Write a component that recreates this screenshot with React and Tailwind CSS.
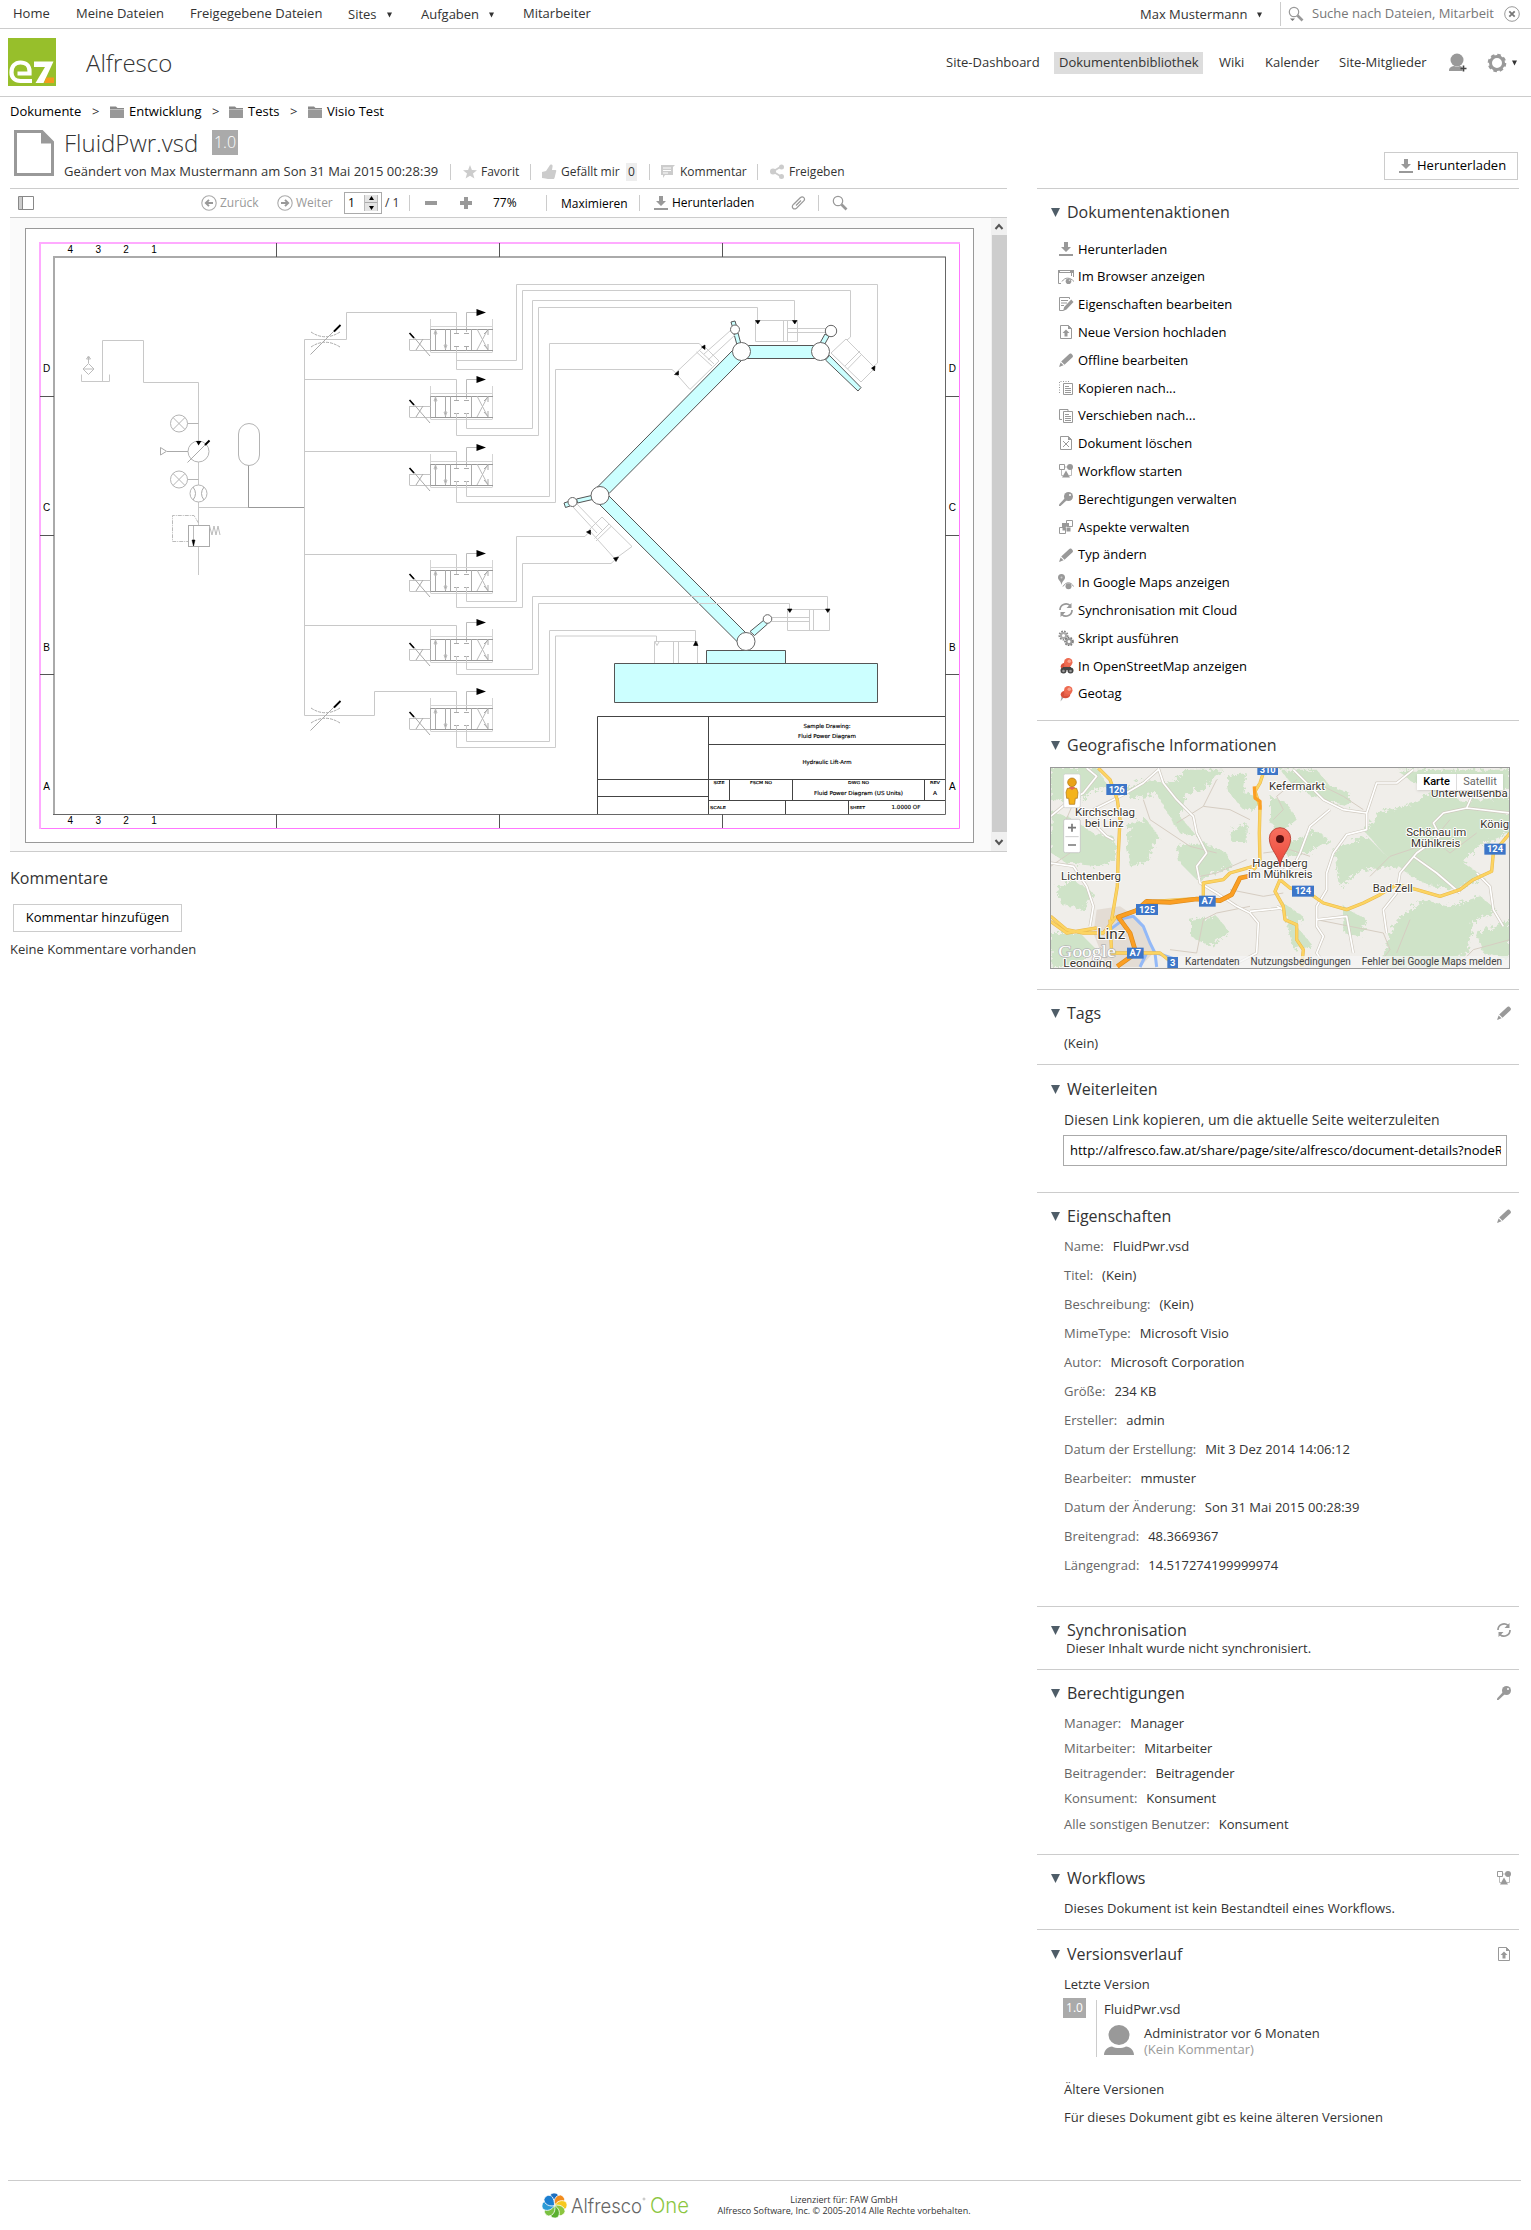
import React from "react";

const G = "#999999";

function Svg({ w = 16, h = 16, vb, children, className = "" }) {
  return (
    <svg width={w} height={h} viewBox={vb || `0 0 ${w} ${h}`} className={"shrink-0 " + className} fill="none">
      {children}
    </svg>
  );
}

const DownloadIcon = () => (
  <Svg><path d="M6 1h4v5h3l-5 5-5-5h3zM1 13h14v2H1z" fill={G} /></Svg>
);
const PencilIcon = () => (
  <Svg><path d="M1 15l1.600-4.500 3 2.800zM3.200 9.500l7.800-7.300c.8-.8 1.800-.9 2.600-.2l.9.900c.7.8.6 1.800-.2 2.600l-7.800 7.200z" fill={G} /></Svg>
);
const BrowserIcon = () => (
  <Svg><path d="M0 1h16v3H0z" fill={G} /><path d="M2 2.500h10" stroke="#fff" /><path d="M.5 3v11.500H3M15.500 3v5M13.500 4v3M4 12.500c3-4.500 8-4.500 12 0" stroke={G} /><circle cx="10.500" cy="12.300" r="2.800" fill={G} /><circle cx="11.500" cy="11.300" r=".8" fill="#ddd" /></Svg>
);
const EditDocIcon = () => (
  <Svg><path d="M11.500 3V1.500H1.500v13h4M3 4.500h7M3 7h6M3 9.500h3" stroke={G} /><path d="M5 15l1.200-4 7-7.500L15.500 6l-7 7.500z" fill={G} /></Svg>
);
const UploadDocIcon = () => (
  <Svg><path d="M2.500 1.500h8l3 3v10h-11z" stroke={G} /><path d="M10 1l4 4h-4zM8 5.500l3.500 3.500H9.500v3.500h-3V9H4.500z" fill={G} /></Svg>
);
const CopyIcon = () => (
  <Svg><path d="M1.500 13V1.500H11" stroke={G} strokeDasharray="1 1.500" /><path d="M5.500 3.500h9v11h-9z" stroke={G} /><path d="M7 6.500h4M7 8.500h6M7 10.500h6M7 12.500h6" stroke={G} /></Svg>
);
const MoveIcon = () => (
  <Svg><path d="M4 11.500H1.500v-10H10V3M5.500 3.500h9v11h-9z" stroke={G} /><path d="M7 6.500h4M7 8.500h6M7 10.500h6M7 12.500h6" stroke={G} /></Svg>
);
const DeleteIcon = () => (
  <Svg><path d="M2.500 1.500h8l3 3v10h-11zM5 6l6 6M11 6l-6 6" stroke={G} /><path d="M10 1l4 4h-4z" fill={G} /></Svg>
);
const WorkflowIcon = () => (
  <Svg><path d="M1.500 1.500h5v5h-5z" stroke={G} /><path d="M3.500 7v5.500H5M13.500 6v6.500H11M7 4h3" stroke="#bbb" /><circle cx="12" cy="4" r="3" fill={G} /><path d="M8 7.500l4 7H4z" fill={G} /></Svg>
);
const KeyIcon = () => (
  <Svg><circle cx="10.500" cy="5.500" r="4.500" fill={G} /><path d="M1 13.500L7 7l2 2-6.500 6H1z" fill={G} /><circle cx="12" cy="4" r="1" fill="#fff" /></Svg>
);
const AspectIcon = () => (
  <Svg><path d="M8.500 1.500h6v6h-6zM1.500 8.500h6v6h-6z" stroke={G} /><path d="M4 4h4v4H4zM8.500 8.500h4v4h-4zM8 4h3v3H8zM4.500 8.500h3v3h-3z" fill={G} /></Svg>
);
const MapsIcon = () => (
  <Svg><path d="M3.500 0a3.500 3.500 0 013.500 3.500C7 6 4 7 3.500 11 3 7 0 6 0 3.500A3.500 3.500 0 013.500 0z" fill={G} /><circle cx="3.500" cy="3.500" r="1" fill="#ccc" /><path d="M5 12.500c3-5 8-5 10.500 0" stroke={G} /><circle cx="10.500" cy="12.200" r="3" fill={G} /></Svg>
);
const SyncIcon = () => (
  <Svg><path d="M2 8a6 6 0 0110-4.600M14 8a6 6 0 01-10 4.600" stroke={G} strokeWidth="1.700" /><path d="M13.500 1v5H8.500zM2.500 15v-5h5z" fill={G} /></Svg>
);
const GearsIcon = () => (
  <Svg>
    <circle cx="5.500" cy="5.500" r="4" stroke="#888" strokeWidth="2" strokeDasharray="1.600 1.100" /><circle cx="5.500" cy="5.500" r="2.600" stroke="#aaa" strokeWidth="2" />
    <circle cx="11" cy="11.500" r="3.800" stroke="#777" strokeWidth="2" strokeDasharray="1.600 1.100" /><circle cx="11" cy="11.500" r="2.500" stroke="#999" strokeWidth="2" />
  </Svg>
);
const PinShape = () => (
  <><path d="M7 10l-4.500 5.500 1.500-7z" fill="#aaa" /><ellipse cx="7.500" cy="8.500" rx="4.800" ry="3.800" fill="#d9503a" /><path d="M6 4h8l-3 6H6z" fill="#e2604a" /><circle cx="10.300" cy="4.300" r="4.200" fill="#ee6a50" /><circle cx="11.300" cy="3.300" r="1.800" fill="#f8a48f" /></>
);
const PinIcon = () => <Svg><PinShape /></Svg>;
const OsmIcon = () => (
  <Svg><PinShape /><circle cx="5.500" cy="12.500" r="3" fill="#444" /><circle cx="12.500" cy="12.500" r="3" fill="#444" /><path d="M5 9h8v3H5z" fill="#444" /><circle cx="5.500" cy="13" r="1.300" fill="#999" /><circle cx="12.500" cy="13" r="1.300" fill="#999" /></Svg>
);
const FolderIcon = () => (
  <Svg w={14} h={12}><path d="M0 .500h6l1.500 1.500H14v1.300H0z" fill="#888" /><path d="M0 3.500h14V12H0z" fill="#999" /></Svg>
);
const CircleArrow = ({ flip }) => (
  <Svg className={flip ? "rotate-180" : ""}><circle cx="8" cy="8" r="7.200" stroke="#aaa" strokeWidth="1.100" /><path d="M12 8H5.500M8 4.800L4.800 8 8 11.200" stroke="#999" strokeWidth="1.900" /></Svg>
);
const Magnifier = ({ caret }) => (
  <Svg><circle cx="6" cy="6" r="4.700" stroke={G} strokeWidth="1.200" /><path d="M9.500 9.500l5 5" stroke={G} strokeWidth="2.600" />{caret && <path d="M2 12.500h5L4.500 15z" fill="#777" />}</Svg>
);

const Caret = () => <svg width="5" height="6" className="shrink-0"><path d="M0 .500h5L2.500 5.500z" fill="#333" /></svg>;

/* ---------- hydraulic drawing ---------- */
const valves = [
  { y: 312.5, feed: "M346.500 312.500H456.500V333" },
  { y: 379.5, feed: "M304.500 379.500H456.500V400" },
  { y: 447.5, feed: "M304.500 451.500H456.500V468" },
  { y: 553.5, feed: "M304.500 554.500H456.500V574" },
  { y: 622.5, feed: "M304.500 625.500H456.500V643" },
  { y: 691.5, feed: "M304.500 715.500H374.500V691.500H456.500V712" },
];
const pipes = [
  "M456.500 347V360.500H516.500V284.500H877.500V363L872 368",
  "M456.500 347V369.500H522.500V290.500H850.500V337L847 340",
  "M466.500 413V428.500H532.500V300.500H794.500V320",
  "M456.500 413V435.500H538.500V307.500H757.500V320",
  "M466.500 481V496.500H549.500V343.500H699L704 348",
  "M456.500 481V502.500H555.500V369.500H672L677 374",
  "M466.500 587V601.500H516.500V536.500H585L589 532",
  "M456.500 587V607.500H522.500V563.500H611L616 559",
  "M466.500 656V669.500H532.500V596.500H827.500V609",
  "M456.500 656V674.500H538.500V603.500H789.500V609",
  "M466.500 725V741.500H549.500V630.500H695.500V642",
  "M456.500 725V747.500H555.500V636H656.500V642",
];

function Valve({ y }) {
  return (
    <g transform={`translate(0 ${y - 0.5})`} stroke="#bbb" fill="none">
      <path d="M466.500 20V.500H477" />
      <path d="M476.500 -3V4L486 .500z" fill="#000" stroke="none" />
      <path d="M430.500 7V40M492.500 7V40M430.500 14.500H492.500M430.500 40.500H492.500" stroke="#d4d4d4" />
      <path d="M430 17.500H493M430 38.500H493" stroke="#999" />
      <path d="M450.500 17V38M471.500 17V38M445.500 17V38M435.500 17V38M430.500 17V38" stroke="#aaa" />
      <path d="M434 22l1.500-4 1.500 4zM444 33l1.500 4 1.500-4z" />
      <path d="M454 21.500h5M464 21.500h5M454 34.500h5M464 34.500h5M456.500 34.500V39M466.500 34.500V39" stroke="#aaa" />
      <path d="M477 17L488 38M488 17L477 38" stroke="#bbb" />
      <path d="M484 22L488 18V23M484 33L488 37.500V32" stroke="#aaa" />
      <path d="M409.500 27.500H430.500M409.500 38.500H430.500M409.500 27V38" stroke="#c4c4c4" />
      <path d="M430 44L411 22M416 38L423 27" stroke="#aaa" />
      <path d="M409.500 21L414 26" stroke="#000" strokeWidth="1.600" />
    </g>
  );
}

function Throttle({ y }) {
  return (
    <g transform={`translate(0 ${y})`} fill="none" stroke="#aaa">
      <path d="M311 -7.500Q325 2 340 -7.500M311 7.500Q325 -2 340 7.500" strokeDasharray="3 1" />
      <path d="M310.500 15L340 -14.500" />
      <path d="M334 -8L340.500 -14.500" stroke="#000" strokeWidth="1.800" />
    </g>
  );
}

function Gauge({ y }) {
  return (
    <g fill="none" stroke="#b4b4b4">
      <circle cx="179" cy={y} r="8.500" />
      <path d={`M173 ${y - 6}l12 12M185 ${y - 6}l-12 12M187.500 ${y}H198.500`} />
    </g>
  );
}

function Drawing() {
  const T = ({ x, y, w, s = 5.5, children, a = "middle" }) => (
    <text x={x} y={y} fontSize={s} textAnchor={a} textLength={w} lengthAdjust="spacingAndGlyphs" fill="#000" stroke="#000" strokeWidth=".15">{children}</text>
  );
  return (
    <svg width="949" height="615" viewBox="26 229 947 613" className="block border border-[#999] bg-white" fontFamily="DejaVu Sans, sans-serif">
      <g fill="none">
        <path d="M40.500 828.500H959.500V243.500" stroke="#ff77ff" />
        <path d="M40 829V243H960" stroke="#ffaaff" strokeWidth="2" />
        <path d="M54 814V257H945" stroke="#aaa" strokeWidth="2" />
        <path d="M53 814.500H945.500V256.500" stroke="#666" />
        <path d="M276.500 243V257M499.500 243V257M722.500 243V257M276.500 814V828M499.500 814V828M722.500 814V828M40 396.500H54M40 535.500H54M40 674.500H54M945 396.500H959M945 535.500H959M945 674.500H959" stroke="#555" />
      </g>
      <g fontFamily="Liberation Sans, sans-serif" fill="#000" textAnchor="middle">
        {["D", "C", "B", "A"].map((l, i) => (
          <g key={l} fontSize="10">
            <text x="46.700" y={372 + i * 139.400}>{l}</text><text x="952.300" y={372 + i * 139.400}>{l}</text>
          </g>
        ))}
        {["4", "3", "2", "1"].map((l, i) => (
          <g key={l} fontSize="10">
            <text x={70.300 + i * 27.900} y="253">{l}</text><text x={70.300 + i * 27.900} y="824">{l}</text>
          </g>
        ))}
      </g>
      <g fill="none" stroke="#c8c8c8">
        <path d="M81.500 374.500V381.500H109.500V374.500M102.500 381.500V340.500H143.500V382.500H198.500V441" />
        <path d="M88.500 363.500L94 369L88.500 374.500L83 369zM83.500 369h10M88.500 363V357M86.500 359l2-3 2 3z" stroke="#bbb" />
        <path d="M198.500 462V485M198.500 502V525.500M198.500 546V575M198.500 507.500H304.500" />
        <path d="M248.500 465V507.500H304.500" stroke="#999" />
        <rect x="238.500" y="423.500" width="21" height="42" rx="10.500" stroke="#b4b4b4" />
        <circle cx="198.500" cy="451.500" r="10.500" stroke="#b4b4b4" />
        <path d="M187.500 462.500L209.500 440.500M167 451.500H188M160.500 447.500V455L166.500 451.300z" stroke="#aaa" />
        <path d="M205 445L209.500 440.500" stroke="#000" strokeWidth="2" />
        <path d="M196 441H201.500L198.500 445.500z" fill="#000" stroke="none" />
        <circle cx="198.500" cy="493.500" r="8.500" stroke="#b4b4b4" />
        <path d="M193 487q5 6.500 0 13M204 487q-5 6.500 0 13" stroke="#aaa" />
        <path d="M198.500 523L194 515.500H172.500V541.500H188" strokeDasharray="4 1 1 1" stroke="#bbb" />
        <rect x="188.500" y="525.500" width="21" height="21" stroke="#aaa" />
        <path d="M193.500 526V546M209.500 526l2.500 9 2-9 2 9 2-9 2 9" stroke="#bbb" />
        <path d="M192 540h3l-1.500 6z" fill="#000" stroke="#000" strokeWidth=".5" />
        <path d="M304.500 715.500V339.500H346.500V312.500" />
        {valves.map((v) => <path key={v.y} d={v.feed} />)}
      </g>
      <Gauge y={423.5} />
      <Gauge y={479.5} />
      <Throttle y={339.5} />
      <Throttle y={715.5} />
      {valves.map((v) => <Valve key={v.y} y={v.y} />)}

      <g fill="#ccffff" stroke="#555">
        <path d="M597.500 487L732.500 350.500L742 360L609 493.500z" />
        <path d="M741 345.500H820V358.500H741z" />
        <path d="M608 495L746 633L737.500 642L599.500 504.500z" />
        <path d="M829.500 355.500L861 387.500L858 391L825.500 360z" />
        <path d="M731 322l4-1 1.500 5-4 1zM734 334l4-1 3 11-4 1zM825 334l4 2.500-5 9-4-2.500zM564 503l4.500-1.500 1.500 4.500-4.500 1.500zM576.500 499l15-3.500 1 4-15 3.500zM764 620l3.500 4-13 11.500-4.500-4z" />
        <path d="M706.500 650.500H785.500V663.500H706.500z" />
        <path d="M614.500 663.500H877.500V702.500H614.500z" />
      </g>
      <g fill="none" stroke="#ccc">
        {pipes.map((p) => <path key={p} d={p} />)}
        <path d="M755.500 320.500H797.500V341.500H755.500zM783.500 320.500V341.500M787.500 320.500V341.500M787.500 328.500H826M787.500 332.500H826" />
        <path d="M675.500 373L704 346L719 361L690 389.500zM696.500 352L712 366M699 350L714 364M704 354L731 330M708 360L735 335" />
        <path d="M846 339L831 353L861 382L875 368zM860 351L845 366M862 354L847.500 369" />
        <path d="M602 517L589 530L615 559L632 546.500zM609 524L594.500 538.500M611 526.500L596 541M576 503L602 530M573 507L597 533" />
        <path d="M787.500 609.500H829.500V630.500H787.500zM809.500 609.500V630.500M813.500 609.500V630.500M772 617.500H809.500M772 621.500H809.500" />
        <path d="M654.500 663V641.500H697.500V663M673.500 641.500V663M678.500 641.500V663M655 642l2 3.500 2-3.500" />
      </g>
      <path d="M755.500 320.500h4.500l-2.200 3.500zM792.500 320.500h4.500l-2.200 3.500zM787.500 609h4.500l-2.200 3.500zM825.500 609h4.500l-2.200 3.500zM693.500 645.500h4.500l-2.200-4.500zM674.500 374.500l4-3.500v4zM701.500 347l3.500-2v4.500zM586.500 532l4-2v4.500zM613.500 558l5-1-2.500 4.500zM871.500 368l3.500-2-.5 5z" fill="#000" stroke="#000" strokeWidth=".6" />
      <g fill="#fff" stroke="#666">
        <circle cx="741.500" cy="351.500" r="9" /><circle cx="820.500" cy="351.500" r="9" /><circle cx="600" cy="495.500" r="9" /><circle cx="746" cy="641.500" r="9" />
        <circle cx="735" cy="329.500" r="4.500" /><circle cx="831" cy="331" r="5.700" /><circle cx="572.500" cy="502" r="4.500" /><circle cx="767.500" cy="619" r="4.300" />
      </g>
      <path fill="none" stroke="#444" d="M597.500 814V716.500H945M708.500 716V814M708.500 744.500H945M597.500 779.500H945M597.500 796.500H708.500M708.500 800.500H945M729.500 779.500V800.500M792.500 779.500V800.500M924.500 779.500V800.500M785.500 800.500V814M848.500 800.500V814" />
      <T x={827} y={728} w={47}>Sample Drawing:</T>
      <T x={827} y={738} w={58}>Fluid Power Diagram</T>
      <T x={827} y={764} w={49}>Hydraulic Lift-Arm</T>
      <T x={858.5} y={795} w={89}>Fluid Power Diagram (US Units)</T>
      <T x={935} y={795} w={4}>A</T>
      <T x={719} y={784} w={11} s={4}>SIZE</T>
      <T x={761} y={784} w={22} s={4}>FSCM NO</T>
      <T x={858.5} y={784} w={21} s={4}>DWG NO</T>
      <T x={935} y={784} w={10} s={4}>REV</T>
      <T x={718} y={809} w={16} s={4}>SCALE</T>
      <T x={857.5} y={809} w={15} s={4}>SHEET</T>
      <T x={906} y={809} w={29}>1.0000 OF</T>
    </svg>
  );
}

/* ---------- map ---------- */
const forests = [
  "62,145 200,145 235,200 180,215 150,250 62,240",
  "62,270 130,300 190,340 250,350 260,420 200,440 110,430 62,400",
  "80,500 130,480 190,520 160,570 90,550",
  "62,640 150,640 200,690 140,742 62,742",
  "290,210 340,180 430,190 470,150 580,150 520,210 470,220 450,290 500,350 450,340 400,260 380,220 300,240",
  "300,310 350,300 385,350 350,430 300,440 290,380",
  "440,380 520,370 590,400 610,440 500,480 450,430",
  "590,170 650,160 640,220 680,230 685,270 640,270 600,220",
  "720,230 770,250 800,300 760,330 790,370 850,330 900,360 830,400 770,410 720,300",
  "600,330 650,310 650,370 610,370",
  "750,150 860,150 900,200 960,220 960,260 880,240 800,210",
  "1100,150 1440,150 1440,205 1240,200 1150,190",
  "1050,280 1150,250 1220,205 1300,245 1440,230 1440,340 1340,380 1300,430 1360,470 1290,510 1200,500 1130,460 1060,400 1000,330",
  "910,390 1010,350 1060,400 1110,440 1000,450 930,500",
  "1100,600 1180,540 1260,560 1350,530 1400,570 1330,610 1310,700 1250,742 1060,742 1070,670",
  "1340,640 1440,600 1440,720 1360,700",
  "480,600 560,590 600,640 540,680 480,650",
  "760,550 820,590 800,620 850,680 790,690 770,600",
  "940,560 1010,600 990,650 940,640",
];
function MapArt() {
  return (
    <svg viewBox="63 145 1374 600" width="458" height="200" className="block" fontFamily="Roboto, sans-serif">
      <defs>
        <filter id="rag" x="-5%" y="-5%" width="110%" height="110%">
          <feTurbulence type="fractalNoise" baseFrequency="0.080" numOctaves="3" seed="7" />
          <feDisplacementMap in="SourceGraphic" scale="30" />
        </filter>
        <linearGradient id="pin" x1="0" y1="0" x2="0" y2="1"><stop offset="0" stopColor="#f9705f" /><stop offset="1" stopColor="#e9483a" /></linearGradient>
      </defs>
      <rect x="60" y="140" width="1380" height="610" fill="#f0eeea" />
      <g fill="#cfe3c8" filter="url(#rag)">{forests.map((f) => <polygon key={f} points={f} />)}</g>
      <path d="M200 570L270 560L330 600L370 700L330 742H230L190 640z" fill="#e3dcd4" />
      <g fill="none" stroke="#d6cdc2" strokeWidth="3">
        <path d="M340 240L360 300L420 340L480 380L560 400M520 260L600 270L660 300M560 180L520 260L440 310M650 420L560 460L510 470M700 400L780 390L840 410M600 510L700 530L760 520M860 600L960 620L1060 640L1080 690L1040 742M660 560L560 580L520 600L500 700L420 690M880 200L940 230L1000 270M1020 470L1080 410L1170 380M1140 600L1100 700M1260 300L1210 360L1260 400L1340 340M1280 742L1330 690L1440 660M130 250L100 320L120 400L62 440M730 300L760 270L740 230L800 180" />
      </g>
      {["#d0cac0", "#ffffff"].map((c, i) => (
        <path key={c} fill="none" stroke={c} strokeWidth={i ? 5 : 9} strokeLinejoin="round" d="M385 145L400 190L440 240L490 290L500 340L530 400L500 440L510 490L560 520L620 560L660 580L685 610L680 700L600 742M385 150L340 190L280 225L190 270M170 145L200 170L160 220L110 250L62 290M200 320L230 350L250 360M62 430L130 440L170 500L190 560L180 620M660 575L760 565M900 270L840 320L810 400L790 440L760 450M790 150L830 190L880 240L940 270L1010 280L1040 190L1100 190L1150 150M1010 280L1010 330L950 345L910 400L890 460L890 510L860 560L860 620L880 650L860 700L890 742M860 600L950 590L970 700M1440 280L1310 265L1240 280L1210 310L1230 350L1160 400L1110 460L1100 520L1060 570L1070 640M1330 220L1310 265M1340 460L1380 500L1390 570L1420 620M1150 410L1220 460L1290 520M760 570L740 560" />
      ))}
      <path d="M260 600L310 590L340 620L360 670L375 700L380 742M240 630L280 600M380 700L440 720M350 700L330 742" fill="none" stroke="#93b9f7" strokeWidth="9" />
      <g fill="none" strokeLinejoin="round">
        {["#e9b84c", "#fcd462"].map((c, i) => (
          <path key={c} stroke={c} strokeWidth={i ? 7 : 10} d="M205 145L240 180L262 240L270 300L265 400L262 500L245 600M62 590L110 630L160 640L220 640L260 590M62 605L110 640L200 625M520 540L520 490L580 480L600 460L670 440M705 145L690 190L675 215L690 260L688 340L690 430L670 450M750 480L735 515L760 560L765 600L800 615L800 660L820 690L815 742M750 480L780 505L830 515L880 550L950 570L1000 550L1050 525L1100 495L1160 510L1230 530L1290 510L1330 480L1385 455L1390 400L1440 340M240 600L245 700L330 700L390 700L440 740M370 545L450 540L530 535" />
        ))}
        <path stroke="#dd8b1b" strokeWidth="14" d="M655 470L630 475L605 525L570 543L500 538L420 548L350 545L320 572L265 592L300 640L318 700L262 740" />
        <path stroke="#fb9f24" strokeWidth="10" d="M655 470L630 475L605 525L570 543L500 538L420 548L350 545L320 572L265 592L300 640L318 700L262 740M673 200L675 235L690 245L690 270" />
      </g>
      <g fontWeight="700" fontSize="28" fill="#fff" textAnchor="middle">
        {[["126", 260, 209, 62], ["310", 713, 149, 62], ["125", 351, 569, 66], ["A7", 532, 544, 50], ["124", 819, 514, 66], ["124", 1395, 388, 64], ["A7", 316, 700, 50], ["3", 428, 728, 32]].map(([t, x, y, w]) => (
          <g key={t + x}><rect x={x - w / 2} y={y - 16} width={w} height="33" fill="#3d76c8" /><text x={x} y={y + 10}>{t}</text></g>
        ))}
      </g>
      <g fontSize="33" fill="#3b352e" textAnchor="middle" stroke="#fff" strokeWidth="6" strokeLinejoin="round" paintOrder="stroke">
        {[["Kefermarkt", 801, 210, 168], ["Kirchschlag", 225, 288, 180], ["bei Linz", 223, 321, 116], ["Lichtenberg", 183, 480, 180], ["Unterweißenba", 1318, 231, 230], ["König", 1394, 324, 86], ["Schönau im", 1219, 348, 180], ["Mühlkreis", 1217, 381, 148], ["Hagenberg", 750, 441, 166], ["im Mühlkreis", 751, 474, 194], ["Bad Zell", 1088, 518, 120], ["Leonding", 173, 743, 146]].map(([t, x, y, w]) => (
          <text key={t} x={x} y={y} textLength={w} lengthAdjust="spacingAndGlyphs">{t}</text>
        ))}
        <text x="244" y="657" fontSize="45" textLength="84" lengthAdjust="spacingAndGlyphs">Linz</text>
      </g>
      <text x="85" y="711" fontSize="50" textLength="172" lengthAdjust="spacingAndGlyphs" fontFamily="Liberation Serif, serif" fill="#fff" stroke="#b5b5b5" strokeWidth="4" paintOrder="stroke">Google</text>
      <path d="M750 440C746 405 718 390 718 356a32 32 0 0164 0C782 390 754 405 750 440z" fill="url(#pin)" stroke="#b53a2e" strokeWidth="2.500" />
      <circle cx="750" cy="358" r="12" fill="#5a0f0f" />
      <rect x="101" y="163" width="50" height="101" rx="5" fill="#fff" stroke="#ccc" strokeWidth="2" />
      <path d="M112 206h28l4 12-2 18h-6l-2 18h-16l-2-18h-6l-2-18z" fill="#f4b31c" stroke="#a86e10" strokeWidth="2" />
      <path d="M116 202h20l-10 10z" fill="#e8685a" />
      <circle cx="126" cy="188" r="13" fill="#e9a31a" stroke="#a86e10" strokeWidth="2" />
      <rect x="101" y="299" width="50" height="100" rx="5" fill="#fff" stroke="#bbb" strokeWidth="2" />
      <path d="M106 351h40" stroke="#ccc" strokeWidth="3" />
      <path d="M114 324h24M126 312v24M114 376h24" stroke="#777" strokeWidth="5" />
    </svg>
  );
}

/* ---------- sidebar ---------- */
const Line = ({ h, children, className = "" }) => (
  <div className={"flex items-center whitespace-nowrap " + className} style={{ height: h }}>{children}</div>
);

function Panel({ title, height, top, icon, children }) {
  return (
    <section className="border-t border-[#ccc]" style={{ height, paddingTop: top }}>
      <div className="flex h-6 items-center pl-[14px] pr-[7px]">
        <svg width="9" height="9" className="mr-[7px] shrink-0"><path d="M0 0h9L4.500 9z" fill="#4f5d68" /></svg>
        <h2 className="grow text-[16px] text-[#333]">{title}</h2>
        {icon}
      </div>
      {children}
    </section>
  );
}

const actions = [
  ["Herunterladen", DownloadIcon], ["Im Browser anzeigen", BrowserIcon], ["Eigenschaften bearbeiten", EditDocIcon], ["Neue Version hochladen", UploadDocIcon],
  ["Offline bearbeiten", PencilIcon], ["Kopieren nach...", CopyIcon], ["Verschieben nach...", MoveIcon], ["Dokument löschen", DeleteIcon],
  ["Workflow starten", WorkflowIcon], ["Berechtigungen verwalten", KeyIcon], ["Aspekte verwalten", AspectIcon], ["Typ ändern", PencilIcon],
  ["In Google Maps anzeigen", MapsIcon], ["Synchronisation mit Cloud", SyncIcon], ["Skript ausführen", GearsIcon], ["In OpenStreetMap anzeigen", OsmIcon], ["Geotag", PinIcon],
];
const properties = [
  ["Name", "FluidPwr.vsd"], ["Titel", "(Kein)"], ["Beschreibung", "(Kein)"], ["MimeType", "Microsoft Visio"], ["Autor", "Microsoft Corporation"], ["Größe", "234 KB"],
  ["Ersteller", "admin"], ["Datum der Erstellung", "Mit 3 Dez 2014 14:06:12"], ["Bearbeiter", "mmuster"], ["Datum der Änderung", "Son 31 Mai 2015 00:28:39"],
  ["Breitengrad", "48.3669367"], ["Längengrad", "14.517274199999974"],
];
const permissions = [["Manager", "Manager"], ["Mitarbeiter", "Mitarbeiter"], ["Beitragender", "Beitragender"], ["Konsument", "Konsument"], ["Alle sonstigen Benutzer", "Konsument"]];

const Pair = ({ k, v, h }) => (
  <Line h={h} className="pl-[27px]"><span className="mr-[9px] text-[#666]">{k}:</span><span className="text-[#333]">{v}</span></Line>
);

function Sidebar() {
  return (
    <aside className="ml-[30px] w-[482px] pt-[55px]">
      <div className="flex h-[36px] justify-end pr-px">
        <button className="flex h-[28px] w-[134px] items-center border border-[#ccc] pl-[13px] text-black"><DownloadIcon /><span className="ml-[3px]">Herunterladen</span></button>
      </div>
      <Panel title="Dokumentenaktionen" height={532} top={11}>
        <div className="pl-[21px] pt-[11px]">
          {actions.map(([t, I]) => (
            <Line key={t} h={27.8} className="text-black"><span className="mr-[4px]"><I /></span><span className="pt-px">{t}</span></Line>
          ))}
        </div>
      </Panel>
      <Panel title="Geografische Informationen" height={269} top={12}>
        <div className="relative ml-[13px] mt-[10px] h-[202px] w-[460px] border border-[#999]">
          <MapArt />
          <div className="absolute right-[6px] top-[6px] flex h-4 bg-white font-[Roboto] text-[11px] leading-4 shadow">
            <span className="w-[40px] border-r border-[#ddd] text-center font-medium text-black">Karte</span>
            <span className="w-[46px] text-center text-[#666]">Satellit</span>
          </div>
          <div className="absolute bottom-0 right-0 flex h-[12px] w-[331px] justify-between bg-[#f5f5f5]/70 pl-[7px] pr-[7px] font-[Roboto] text-[10px] leading-[12px] text-[#444]">
            <span>Kartendaten</span><span>Nutzungsbedingungen</span><span>Fehler bei Google Maps melden</span>
          </div>
        </div>
      </Panel>
      <Panel title="Tags" height={75} top={11} icon={<PencilIcon />}>
        <Line h={38} className="pl-[27px]">(Kein)</Line>
      </Panel>
      <Panel title="Weiterleiten" height={128} top={12} icon={null}>
        <Line h={36} className="pl-[27px] text-[14px]">Diesen Link kopieren, um die aktuelle Seite weiterzuleiten</Line>
        <div className="ml-[26px] mt-[-2px] h-[31px] w-[444px] overflow-hidden whitespace-nowrap border border-[#aaa] pl-[6px] pr-[5px] leading-[29px] tracking-[-0.01px] text-black">
          <div className="overflow-hidden">http://alfresco.faw.at/share/page/site/alfresco/document-details?nodeRef=workspace</div>
        </div>
      </Panel>
      <Panel title="Eigenschaften" height={414} top={11} icon={<PencilIcon />}>
        <div className="pt-[4px]">{properties.map(([k, v]) => <Pair key={k} k={k} v={v} h={29} />)}</div>
      </Panel>
      <Panel title="Synchronisation" height={63} top={11} icon={<SyncIcon />}>
        <Line h={14} className="pl-[29px]">Dieser Inhalt wurde nicht synchronisiert.</Line>
      </Panel>
      <Panel title="Berechtigungen" height={185} top={11} icon={<KeyIcon />}>
        <div className="pt-[6px]">{permissions.map(([k, v]) => <Pair key={k} k={k} v={v} h={25.2} />)}</div>
      </Panel>
      <Panel title="Workflows" height={75} top={11} icon={<WorkflowIcon />}>
        <Line h={38} className="pl-[27px]">Dieses Dokument ist kein Bestandteil eines Workflows.</Line>
      </Panel>
      <Panel title="Versionsverlauf" height={251} top={12} icon={<UploadDocIcon />}>
        <div className="pl-[27px]">
          <Line h={38}>Letzte Version</Line>
          <div className="mt-[-6px] flex items-start">
            <span className="-ml-px h-5 w-[23px] bg-[#aaa] text-center text-[12px] leading-5 text-white">1.0</span>
            <div className="ml-[10px] mt-[2px] h-[57px] border-l border-[#ccc] pl-[7px]">
              <div className="h-[18px] leading-[18px]">FluidPwr.vsd</div>
              <div className="mt-[7px] flex">
                <Svg w={30} h={30}><ellipse cx="15" cy="10" rx="10.500" ry="10" fill="#999" /><path d="M0 30c0-5 4-8 8-8.500 4 2 10 2 14 0 4 .5 8 3.500 8 8.500z" fill="#999" /></Svg>
                <div className="ml-[10px] leading-4"><div>Administrator vor 6 Monaten</div><div className="text-[#999]">(Kein Kommentar)</div></div>
              </div>
            </div>
          </div>
          <Line h={24} className="mt-[21px]">Ältere Versionen</Line>
          <Line h={24} className="mt-[4px]">Für dieses Dokument gibt es keine älteren Versionen</Line>
        </div>
      </Panel>
    </aside>
  );
}

const Sep = ({ className = "" }) => <span className={"h-4 w-px shrink-0 bg-[#ccc] " + className} />;
const Cell = ({ w, children, className = "" }) => <span className={"flex shrink-0 items-center whitespace-nowrap " + className} style={{ width: w }}>{children}</span>;

export default function App() {
  return (
    <div className="h-[2230px] w-[1531px] overflow-hidden bg-white font-['Open_Sans',sans-serif] text-[13px] leading-normal text-[#333]">
      <nav className="flex h-[29px] items-center border-b border-[#ccc] pl-[13px]">
        <Cell w={63}>Home</Cell><Cell w={114}>Meine Dateien</Cell><Cell w={158}>Freigegebene Dateien</Cell>
        <Cell w={73} className="gap-[10px] pt-[2px]">Sites <Caret /></Cell><Cell w={102} className="gap-[10px] pt-[2px]">Aufgaben <Caret /></Cell><Cell w={617}>Mitarbeiter</Cell>
        <Cell w={140} className="gap-[10px] pt-px">Max Mustermann <Caret /></Cell>
        <span className="h-6 w-px bg-[#ccc]" />
        <span className="ml-[7px]"><Magnifier caret /></span>
        <span className="ml-[8px] w-[182px] overflow-hidden whitespace-nowrap text-[#777]">Suche nach Dateien, Mitarbeitern</span>
        <Svg className="ml-[10px]"><circle cx="8" cy="8" r="7.300" stroke="#999" /><path d="M5.300 5.300l5.400 5.400M10.700 5.300l-5.400 5.400" stroke="#777" strokeWidth="1.800" /></Svg>
      </nav>
      <header className="flex h-[68px] items-center border-b border-[#ccc] pl-2">
        <svg width="48" height="48" viewBox="0 0 48 48" className="mt-[-1px] shrink-0" fill="none">
          <path d="M0 0h48v48H0z" fill="#97bf2b" />
          <path d="M24 43H12.500C6.500 43 3.500 39.500 3.500 34.500c0-6 3.500-10 9-10 5.500 0 9 3 9 8.500v2.500H9.500" stroke="#fff" strokeWidth="4.200" />
          <path d="M26 23.500H45.500L35.500 45h-8L37 29H26z" fill="#fff" /><path d="M38.300 39.500H46V45H36z" fill="#f39a1e" />
        </svg>
        <h1 className="ml-[30px] w-[860px] shrink-0 pt-px text-[24px] font-light">Alfresco</h1>
        <Cell w={108}>Site-Dashboard</Cell>
        <Cell w={149} className="mr-[16px] h-[22px] bg-[#ddd] pl-[5px]">Dokumentenbibliothek</Cell>
        <Cell w={46}>Wiki</Cell><Cell w={74}>Kalender</Cell><Cell w={109}>Site-Mitglieder</Cell>
        <Svg w={20} h={20}><ellipse cx="9" cy="7" rx="6.500" ry="6.500" fill="#999" /><path d="M1 18c0-3.500 2-4.500 5-5 2 1 4 1 6 0 1 .3 2 .7 2.500 1.500V18z" fill="#999" /><path d="M15.500 12.500v6M12.500 15.500h6" stroke="#444" strokeWidth="1.600" /></Svg>
        <Svg w={20} h={20} className="ml-[19px]"><circle cx="10" cy="10" r="6.500" stroke="#999" strokeWidth="3" /><circle cx="10" cy="10" r="8.200" stroke="#999" strokeWidth="2.200" strokeDasharray="3.600 2.840" /></Svg>
        <span className="ml-[5px] flex"><Caret /></span>
      </header>

      <div className="flex h-[2083px]">
        <main className="ml-[10px] w-[997px] shrink-0">
          <div className="flex h-[30px] items-center text-black">
            <Cell w={82}>Dokumente</Cell><Cell w={18} className="text-[#333]">&gt;</Cell><FolderIcon /><Cell w={83} className="ml-[5px]">Entwicklung</Cell>
            <Cell w={17} className="text-[#333]">&gt;</Cell><FolderIcon /><Cell w={42} className="ml-[5px]">Tests</Cell><Cell w={18} className="text-[#333]">&gt;</Cell><FolderIcon /><Cell w={80} className="ml-[5px]">Visio Test</Cell>
          </div>
          <div className="flex h-[62px] border-b border-[#ccc] pl-1">
            <Svg w={40} h={46} className="mt-[3px]"><path d="M1.500 1.500H28L38.500 12V44.500H1.500z" stroke="#999" strokeWidth="3" /><path d="M27 1l12.500 12.500H27z" fill="#999" /></Svg>
            <div className="ml-[11px] grow">
              <div className="flex h-[31px] items-center">
                <span className="-ml-px w-[148px] text-[24px] font-light">FluidPwr.vsd</span>
                <span className="h-[25px] w-[26px] bg-[#aaa] text-center text-[16px] font-light leading-[25px] text-white">1.0</span>
              </div>
              <div className="flex h-[28px] items-center">
                <Cell w={386} className="-ml-px">Geändert von Max Mustermann am Son 31 Mai 2015 00:28:39</Cell>
                <Sep /><Svg w={16} h={16} className="ml-[11px]"><path d="M8 1l1.900 5 5.100.2-4 3.300 1.400 5L8 11.700 3.600 14.500l1.400-5-4-3.300L6.100 6z" fill="#ccc" /></Svg>
                <Cell w={49} className="ml-[3px] text-[12px]">Favorit</Cell>
                <Sep /><Svg w={16} h={16} className="ml-[10px]"><path d="M1 8l4-1 4-6c2-1 3 0 2.500 2L11 6h3.500c1 0 1 1 .5 2l-1.500 6c-.3 1-1 1-2 1H7c-2 0-3-1-6-1z" fill="#ccc" /></Svg>
                <Cell w={65} className="ml-[4px] text-[12px]">Gefällt mir</Cell>
                <span className="mr-[12px] h-[18px] w-[11px] bg-[#eee] text-center text-[12px] leading-[18px]">0</span>
                <Sep /><Svg w={16} h={16} className="ml-[10px]"><path d="M1 1h14l-2 2v8H5l-2 3v-3H1z" fill="#ccc" /><path d="M3 4h8M3 6.500h8M3 9h5" stroke="#fff" /></Svg>
                <Cell w={77} className="ml-[4px] text-[12px]">Kommentar</Cell>
                <Sep /><Svg w={16} h={16} className="ml-[11px]"><path d="M4 7.500l8-5M4 7.500l8 5" stroke="#ccc" strokeWidth="1.800" /><circle cx="4" cy="7.500" r="3" fill="#ccc" /><circle cx="12.500" cy="3" r="2.500" fill="#ccc" /><circle cx="12.500" cy="12.500" r="2.500" fill="#ccc" /></Svg>
                <Cell w={70} className="ml-[4px] text-[12px]">Freigeben</Cell>
              </div>
            </div>
          </div>
          <div className="flex h-[29px] items-center border-b border-[#ccc] pl-[8px] text-[12px] text-black">
            <Svg w={16} h={14}><path d="M.5.5h15v13H.5z" stroke="#888" /><path d="M1 1h3.500v12H1z" fill="#ccc" /><path d="M4.500 1v12" stroke="#888" /></Svg>
            <span className="ml-[167px]"><CircleArrow /></span><Cell w={57} className="ml-[3px] text-[#999]">Zurück</Cell>
            <CircleArrow flip /><Cell w={48} className="ml-[3px] text-[#999]">Weiter</Cell>
            <span className="flex h-[22px] w-[38px] items-center border border-[#aaa] pl-[3px] pr-[3px]">
              1<span className="ml-auto flex h-4 w-[14px] flex-col items-center justify-around border-x border-[#bbb] bg-[#e4e4e4]">
                <svg width="5" height="4"><path d="M0 4h5L2.500 0z" /></svg><span className="h-px w-full bg-[#aaa]" /><svg width="5" height="4"><path d="M0 0h5L2.500 4z" /></svg>
              </span>
            </span>
            <Cell w={27} className="pl-[3px] text-[#333]">/ 1</Cell>
            <Sep /><span className="ml-[15px] h-[4px] w-[12px] bg-[#999]" />
            <Svg w={12} h={12} className="ml-[23px]"><path d="M4 0h4v4h4v4H8v4H4V8H0V4h4z" fill="#999" /></Svg>
            <Cell w={53} className="ml-[21px]">77%</Cell>
            <Sep /><Cell w={78} className="pl-[14px] pt-[2px]">Maximieren</Cell><Cell w={14}>{""}</Cell>
            <Sep /><span className="ml-[13px]"><DownloadIcon /></span><Cell w={118} className="ml-[3px]">Herunterladen</Cell>
            <Svg><path d="M4 9l6-6c3-2.500 6 .5 3.500 3.200l-7 7c-2.800 2-5.500-.8-3.300-3.500l6.500-6.500M6 10.500l5-5" stroke="#999" strokeWidth="1.200" /></Svg>
            <Sep className="ml-[12px] mr-[13px]" /><Magnifier />
          </div>
          <div className="flex h-[634px] border-b border-[#ccc] bg-[#fafafa]">
            <div className="ml-[15px] mt-[10px] w-[966px]"><Drawing /></div>
            <div className="flex w-4 flex-col items-center bg-[#f0f0f0]">
              <svg width="16" height="17" className="shrink-0"><path d="M4.500 11l3.500-4 3.500 4" fill="none" stroke="#555" strokeWidth="2" /></svg>
              <div className="w-[15px] grow bg-[#cdcdcd]" />
              <svg width="16" height="19" className="shrink-0"><path d="M4.500 8l3.500 4 3.500-4" fill="none" stroke="#555" strokeWidth="2" /></svg>
            </div>
          </div>
          <h2 className="mt-[14px] text-[16px] leading-6">Kommentare</h2>
          <button className="ml-[3px] mt-[14px] block h-[28px] w-[169px] border border-[#ccc] text-center text-black">Kommentar hinzufügen</button>
          <p className="mt-[8px]">Keine Kommentare vorhanden</p>
        </main>
        <Sidebar />
      </div>

      <footer className="mx-2 mr-[10px] flex h-[50px] border-t border-[#ccc] pl-[533px] pt-[11px]">
        <svg width="27" height="27" viewBox="-13.500 -13.500 27 27" className="shrink-0">
          {["#1e6fc0", "#f28c1e", "#f7c81e", "#8cc63f", "#5ab031", "#7ac142", "#2c9bd6", "#1c7fd0"].map((c, i) => (
            <path key={c} d="M0 0C-4 -2 -7 -8 -3 -12C2 -14 6 -10 4 -6C3 -3 1 -1 0 0z" fill={c} stroke="#fff" strokeWidth=".8" transform={`rotate(${i * 45})`} />
          ))}
        </svg>
        <svg width="124" height="27" className="shrink-0" fontFamily="Inter, Liberation Sans, sans-serif" fontWeight="300">
          <text x="3" y="21" fontSize="20" textLength="71" lengthAdjust="spacingAndGlyphs" fill="#666">Alfresco</text>
          <text x="82" y="21" fontSize="21" textLength="39" lengthAdjust="spacingAndGlyphs" fill="#8cc63f">One</text>
          <circle cx="76" cy="7" r="1" fill="none" stroke="#999" strokeWidth=".6" />
        </svg>
        <div className="ml-[24px] w-[256px] whitespace-nowrap pt-[2px] text-center text-[9px] leading-[11px]"><div>Lizenziert für: FAW GmbH</div><div>Alfresco Software, Inc. © 2005-2014 Alle Rechte vorbehalten.</div></div>
      </footer>
    </div>
  );
}
